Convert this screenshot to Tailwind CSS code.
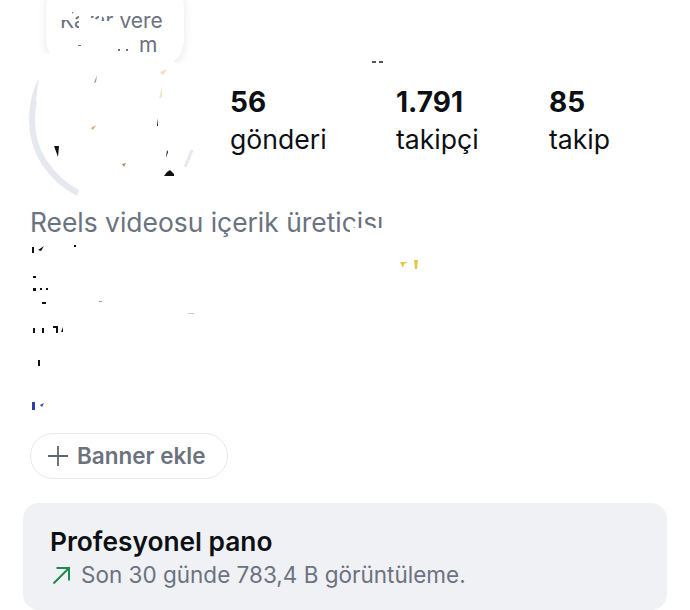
<!DOCTYPE html>
<html lang="tr">
<head>
<meta charset="utf-8">
<script src="https://cdn.jsdelivr.net/npm/@tailwindcss/browser@4"></script>
</head>
<body class="bg-white">
<div class="relative w-[690px] h-[610px] overflow-hidden bg-white font-['Inter',sans-serif] text-[#0c1014]">
  <section class="flex h-[205px] pl-[230px] pt-[83px]">
    <div class="w-[166px]">
      <div class="text-[28px] leading-[38px] font-bold">56</div>
      <div class="text-[26.6px] leading-[36px] font-normal">gönderi</div>
    </div>
    <div class="w-[153px]">
      <div class="text-[28px] leading-[38px] font-bold">1.791</div>
      <div class="text-[26.6px] leading-[36px] font-normal">takipçi</div>
    </div>
    <div>
      <div class="text-[28px] leading-[38px] font-bold">85</div>
      <div class="text-[26.6px] leading-[36px] font-normal">takip</div>
    </div>
  </section>

  <section class="pl-[30px] h-[228px]">
    <p class="text-[26.4px] leading-[34px] text-[#6b7280] whitespace-nowrap">Reels videosu içerik üreticisi</p>
  </section>

  <div class="pl-[30px]">
    <button class="flex items-center gap-[9px] h-[46px] w-[198px] pl-[17px] rounded-full border border-[#e5e7eb] bg-white text-[#6b7280]">
      <svg width="20" height="20" viewBox="0 0 20 20" fill="none" stroke="#5f6670" stroke-width="1.8"><path d="M10 0v20M0 10h20"/></svg>
      <span class="text-[22.5px] font-semibold leading-none">Banner ekle</span>
    </button>
  </div>

  <section class="mt-[24px] ml-[23px] w-[644px] h-[107px] rounded-[16px] bg-[#f0f1f5] pl-[27px] pt-[21px]">
    <h2 class="text-[26.3px] leading-[36px] font-semibold">Profesyonel pano</h2>
    <div class="flex items-center gap-[10px] mt-[-1px]">
      <svg width="21" height="21" viewBox="0 0 21 21" fill="none" stroke="#1f8a4c" stroke-width="2"><path d="M3.5 18.5 19 3M6.5 3H19v12.5"/></svg>
      <span class="text-[22.5px] leading-[32px] text-[#6b7280]">Son 30 günde 783,4 B görüntüleme.</span>
    </div>
  </section>

  <!-- avatar ring -->
  <svg class="absolute left-0 top-0" width="240" height="210" viewBox="0 0 240 210" fill="none">
    <path d="M41 80C30 102 27 136 44 162C54 177 64 186 78 193" stroke="#e5e8ee" stroke-width="6"/>
    <path d="M192 150L185 167" stroke="#e5e8ee" stroke-width="3"/>
  </svg>

  <!-- note bubble -->
  <div class="absolute left-[46px] top-[-20px] w-[138px] h-[88px] rounded-[28px] bg-white shadow-[0_2px_10px_rgba(0,0,0,0.1)]"></div>
  <div class="absolute left-[60px] top-[9px] text-[21px] leading-[23px] text-[#6b7280] whitespace-nowrap">Karar vere</div>
  <div class="absolute left-[139px] top-[35px] text-[21px] leading-[19px] text-[#6b7280] whitespace-nowrap">m</div>

  <!-- blurred-out patches -->
  <svg class="absolute left-0 top-0" width="690" height="430" viewBox="0 0 690 430">
    <g fill="#fff">
      <rect x="58" y="9" width="14" height="11"/>
      <rect x="79" y="9" width="12" height="22"/>
      <rect x="91" y="21" width="26" height="10"/>
      <rect x="99" y="13" width="3" height="6"/>
      <path d="M42 53 100 56 160 54 186 68 190 150 160 190 70 178 36 100Z"/>
      <rect x="368" y="208" width="20" height="7"/>
      <rect x="350" y="228" width="36" height="8"/>
    </g>
    <g fill="#6b7280">
      <rect x="78" y="45" width="3" height="1"/>
      <rect x="118" y="49" width="2" height="2"/>
      <rect x="126" y="49" width="2" height="2"/>
    </g>
    <g fill="#111">
      <path d="M54 146h5l-1 11Z"/>
      <path d="M164 176h10v-2l-4-4-3 2Z"/>
      <path d="M157 118l1 8h-1ZM167 150l1 2-2 6Z"/>
      <rect x="32" y="247" width="2" height="6"/>
      <path d="M38 250l6-4-3 5Z"/>
      <rect x="74" y="245" width="2" height="2"/>
      <rect x="33" y="276" width="3" height="2"/>
      <rect x="33" y="288" width="3" height="3"/>
      <rect x="40" y="288" width="2" height="2"/>
      <rect x="46" y="288" width="2" height="2"/>
      <rect x="42" y="302" width="4" height="2"/>
      <rect x="33" y="328" width="2" height="5"/>
      <rect x="42" y="328" width="2" height="5"/>
      <path d="M53 326h5v7h-2v-5h-3ZM61 332l2-5v5Z"/>
      <rect x="38" y="360" width="2" height="6"/>
      <rect x="372" y="61" width="4" height="2" fill="#555"/>
      <rect x="379" y="61" width="4" height="2" fill="#555"/>
    </g>
    <g>
      <path d="M97 75l-3 8 2-1Z" fill="#a89070"/>
      <path d="M91 128l5-3-3 5Z" fill="#d9a679"/>
      <path d="M122 164l4-1-2 4Z" fill="#b08a6e"/>
      <path d="M162 86l-3 12h3Z" fill="#f5e6d3"/>
      <path d="M160 72l7-3-4 6Z" fill="#f0dcc0"/>
      <rect x="32" y="402" width="3" height="8" fill="#2a3fb0"/>
      <path d="M40 405l4-2-2 4Z" fill="#2a3fb0"/>
      <path d="M400 262l8 0-4 2-1 4Z" fill="#e8c547"/>
      <path d="M414 260h4l-1 9h-2Z" fill="#e8c547"/>
      <rect x="188" y="313" width="6" height="1" fill="#ccc"/>
      <rect x="99" y="301" width="3" height="1" fill="#999"/>
    </g>
  </svg>
</div>
</body>
</html>
